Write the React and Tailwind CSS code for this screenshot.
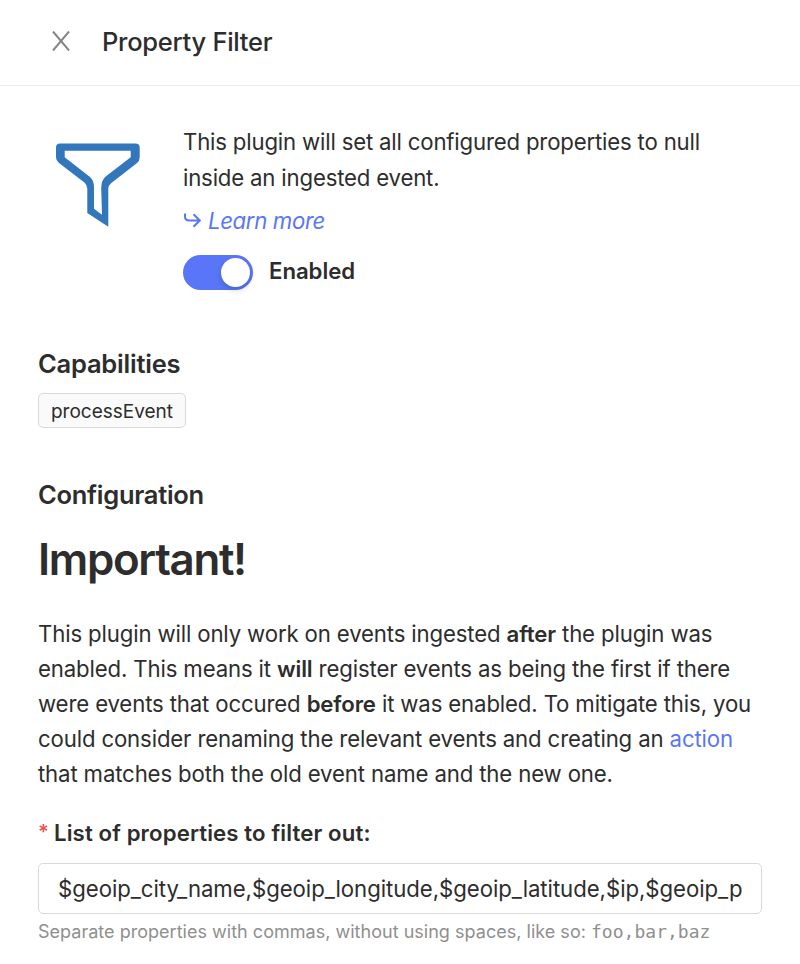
export default function App() {
  return (
    <div className="h-[964px] w-[800px] overflow-hidden bg-white font-['Inter',sans-serif] text-[22.2px] tracking-[-0.18px] text-[#2d2d2d]">
      <header className="flex h-[86px] items-center border-b border-[#ececec] pb-[3px] pl-[52px]">
        <svg width="18" height="20" viewBox="0 0 18 20" fill="none" stroke="#858585" strokeWidth="2"><path d="M1 0.5L17 19.5M17 0.5L1 19.5" /></svg>
        <h1 className="ml-8 pt-[2px] text-[25.5px] font-medium leading-[36px] tracking-[-0.27px]">Property Filter</h1>
      </header>
      <main className="px-[38px] pt-[38px]">
        <section className="flex">
          <svg className="mt-[19px] ml-[18px] shrink-0" width="84" height="84" viewBox="56 143 84 84" fill="#3276bc" fillRule="evenodd">
            <path d="M60 143.5H135.5Q139.7 143.5 139.7 147.5V157.3Q139.7 161 136.7 163.3L111 183.3Q108.3 185.5 108.3 188.8V226.8L87.3 212.9V188.8Q87.3 185 84.7 182.7L58.7 162.7Q56 160.5 56 157.3V147.5Q56 143.5 60 143.5ZM64.7 150.7V157.3L90 177Q94 180.5 94 187V208.8L102 214.7L101.2 188Q101.2 180 106 176.3L130.7 157.3V150.7Z" />
          </svg>
          <div className="ml-[43px]">
            <p className="leading-[35.5px]">This plugin will set all configured properties to null<br />inside an ingested event.</p>
            <a className="mt-[8px] flex h-[35px] items-center italic tracking-[-0.36px] text-[#5a76f8]">
              <svg className="mr-[7px] ml-[1px]" width="17" height="16" viewBox="0 0 17 16" fill="none" stroke="currentColor" strokeWidth="2"><path d="M1 0.5V3.5Q1 7.5 5.3 7.5H15.6M9.5 1.2L15.8 7.5L9.5 13.8" /></svg>
              Learn more
            </a>
            <div className="mt-[17px] flex h-[35px] items-center">
              <span className="flex h-[35px] w-[70px] items-center justify-end rounded-full bg-[#5a76f8] pr-[3px]"><span className="size-[29px] rounded-full bg-white shadow-[0_3px_6px_rgba(0,35,11,0.2)]" /></span>
              <span className="ml-4 pb-[3px] font-semibold tracking-[-0.05px]">Enabled</span>
            </div>
          </div>
        </section>
        <h2 className="mt-[56px] text-[25.5px] font-semibold leading-[36px] tracking-[-0.22px]">Capabilities</h2>
        <span className="mt-[11px] flex h-[35px] w-[148px] items-center justify-center rounded-[5px] border border-[#d9d9d9] bg-[#fafafa] pt-[3px] text-[19px] tracking-normal">processEvent</span>
        <h2 className="mt-[49px] text-[25.5px] font-semibold leading-[36px] tracking-[-0.28px]">Configuration</h2>
        <h3 className="mt-[17px] text-[43.8px] font-semibold leading-[60px] tracking-[-1.3px]">Important!</h3>
        <p className="mt-[25.5px] whitespace-nowrap leading-[35.2px] tracking-[-0.145px]">This plugin will only work on events ingested <b className="font-semibold">after</b> the plugin was<br />enabled. This means it <b className="font-semibold">will</b> register events as being the first if there<br />were events that occured <b className="font-semibold">before</b> it was enabled. To mitigate this, you<br />could consider renaming the relevant events and creating an <a className="text-[#5a76f8]">action</a><br />that matches both the old event name and the new one.</p>
        <label className="mt-[23.5px] flex font-semibold leading-[36px] tracking-[0.12px]">
          <span className="w-[16px] text-[20px] font-semibold leading-[34px] text-[#f0524d]">*</span>List of properties to filter out:
        </label>
        <div className="mt-3 flex h-[51px] items-center rounded-[5px] border border-[#d9d9d9] px-[19px] tracking-[-0.05px]">$geoip_city_name,$geoip_longitude,$geoip_latitude,$ip,$geoip_p</div>
        <p className="mt-[4px] text-[18px] leading-[28px] tracking-[0.02px] text-[#8f8f8f]">Separate properties with commas, without using spaces, like so: <code className="font-['DejaVu_Sans_Mono',monospace]">foo,bar,baz</code></p>
      </main>
    </div>
  );
}
